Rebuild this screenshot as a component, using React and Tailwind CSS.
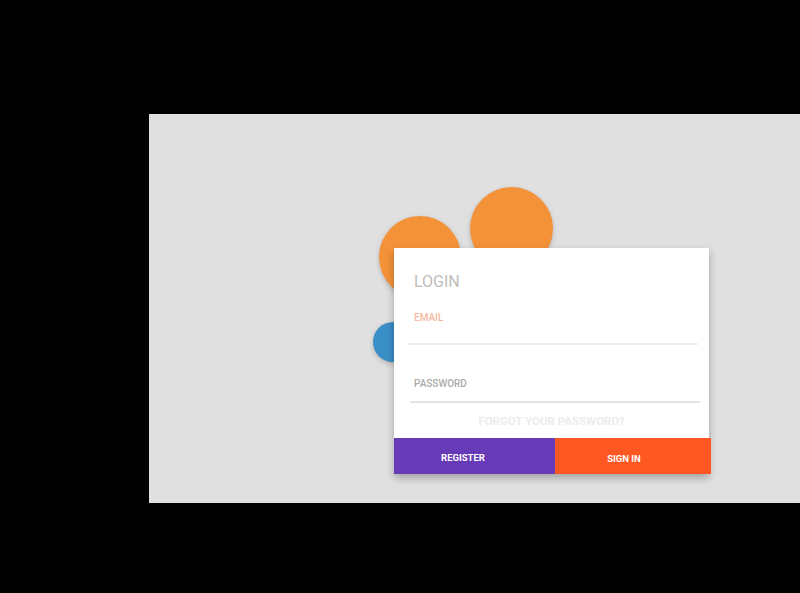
import React from "react";

export default function App() {
  return (
    <div className="w-[800px] h-[593px] bg-black overflow-hidden pt-[114px] pl-[149px]" style={{ fontFamily: "Roboto, 'Liberation Sans', sans-serif" }}>
      <div className="relative h-[389px] w-[651px] bg-[#e0e0e0]">
        <div className="absolute left-[230px] top-[102px] w-[82px] h-[82px] rounded-full bg-[#f4923a] shadow-[0_2px_5px_rgba(0,0,0,0.2)]" />
        <div className="absolute left-[321px] top-[73px] w-[83px] h-[83px] rounded-full bg-[#f4923a] shadow-[0_2px_5px_rgba(0,0,0,0.2)]" />
        <div className="absolute left-[224px] top-[208px] w-[40px] h-[40px] rounded-full bg-[#3b8fc7] shadow-[0_2px_5px_rgba(0,0,0,0.2)]" />
        <div className="absolute left-[245px] top-[134px] w-[315px] h-[226px] bg-white shadow-[0_4px_8px_rgba(0,0,0,0.28)] flex flex-col">
          <div className="pl-[20px] pt-[24px] h-[64px] text-[16px] leading-[20px] text-[#bdbdbd]">LOGIN</div>
          <div className="pl-[20px] text-[10px] leading-[12px] font-medium text-[#f8b9a2]">EMAIL</div>
          <div className="ml-[13px] mt-[19px] w-[291px] h-[2px] bg-[#eeeeee]" />
          <div className="pl-[20px] mt-[33px] text-[10px] leading-[12px] font-medium text-[#ababab]">PASSWORD</div>
          <div className="ml-[16px] mt-[11px] w-[290px] h-[2px] bg-[#e3e3e3]" />
          <div className="mt-[11px] text-center text-[11.5px] leading-[14px] font-bold text-[#ececec]">FORGOT YOUR PASSWORD?</div>
          <div className="mt-auto flex h-[36px] w-[317px]">
            <div className="w-[161px] h-full bg-[#673ab7] flex items-center justify-center pr-[23px] pt-[5px] text-white text-[9.5px] font-bold">REGISTER</div>
            <div className="w-[156px] h-full bg-[#ff5722] flex items-center justify-center pr-[18px] pt-[7px] text-white text-[9.5px] font-bold">SIGN IN</div>
          </div>
        </div>
      </div>
    </div>
  );
}
